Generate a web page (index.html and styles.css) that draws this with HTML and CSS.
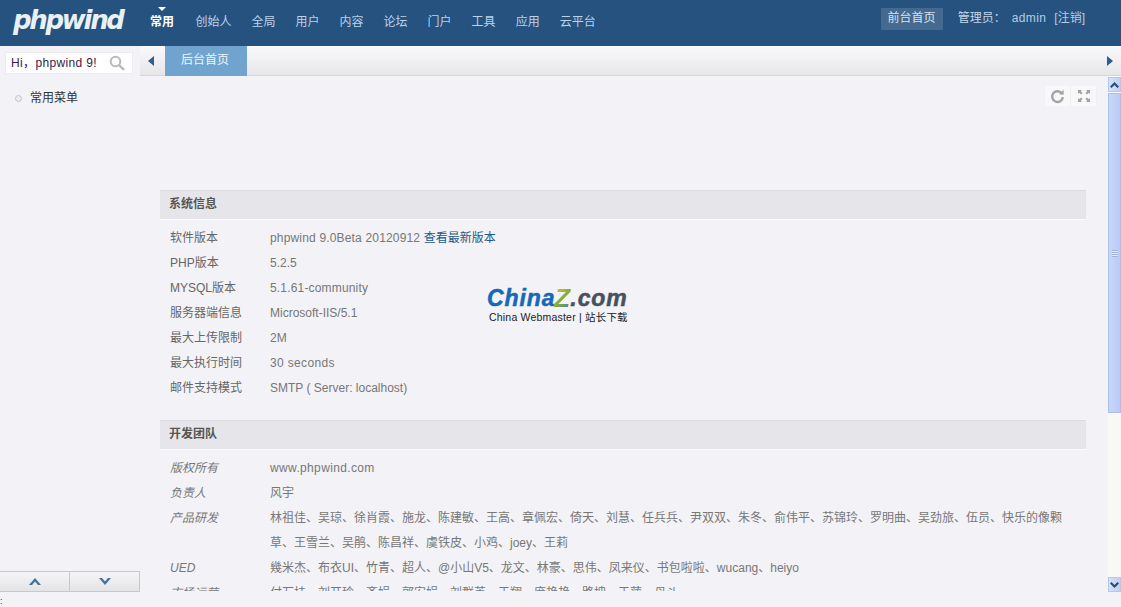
FILE: index.html
```html
<!DOCTYPE html>
<html lang="zh-CN">
<head>
<meta charset="utf-8">
<title>phpwind 后台</title>
<link rel="stylesheet" href="styles.css">
</head>
<body>
<header class="top">
  <div class="logo">phpwind</div>
  <nav class="nav">
    <a class="nav-item active">常用</a>
    <a class="nav-item">创始人</a>
    <a class="nav-item">全局</a>
    <a class="nav-item">用户</a>
    <a class="nav-item">内容</a>
    <a class="nav-item">论坛</a>
    <a class="nav-item">门户</a>
    <a class="nav-item">工具</a>
    <a class="nav-item">应用</a>
    <a class="nav-item">云平台</a>
  </nav>
  <div class="user">
    <a class="home">前台首页</a>
    <span class="admin-label">管理员：</span>
    <span class="admin-name">admin</span>
    <span class="admin-logout">[注销]</span>
  </div>
</header>
<div class="body">
  <aside class="side">
    <div class="search">
      <span class="search-text">Hi，phpwind 9!</span>
      <svg class="search-icon" width="16" height="16" viewBox="0 0 16 16"><circle cx="6.5" cy="6.5" r="4.8" fill="none" stroke="#b9b9b9" stroke-width="2"/><path d="M10 10l5 5" stroke="#b9b9b9" stroke-width="2.4"/></svg>
    </div>
    <div class="menu-item"><i class="dot"></i>常用菜单</div>
    <div class="side-spacer"></div>
    <div class="pager">
      <button class="pager-btn"><svg width="12" height="7" viewBox="0 0 12 7"><path d="M0 7L6 0l6 7H9L6 3.500 3 7z" fill="#42719c"/></svg></button>
      <button class="pager-btn"><svg width="12" height="7" viewBox="0 0 12 7"><path d="M0 0l6 7 6-7H9L6 3.500 3 0z" fill="#42719c"/></svg></button>
    </div>
    <div class="corner">:</div>
  </aside>
  <main class="main">
    <div class="tabs">
      <span class="tab-arrow"><svg width="6" height="10" viewBox="0 0 6 10"><path d="M6 0v10L0 5z" fill="#2b5f8d"/></svg></span>
      <span class="tab">后台首页</span>
      <span class="tab-fill"></span>
      <span class="tab-arrow-right"><svg width="6" height="10" viewBox="0 0 6 10"><path d="M0 0v10l6-5z" fill="#2b5f8d"/></svg></span>
    </div>
    <div class="pane">
      <div class="content">
        <div class="tools">
          <span class="tool"><svg width="15" height="15" viewBox="0 0 14 14"><path d="M11.300 4.500A5 5 0 1 0 12 7.500" fill="none" stroke="#a3a3a3" stroke-width="2.200"/><path d="M8.500 4.800L12.800 5.300V.8z" fill="#a3a3a3"/></svg></span>
          <span class="tool"><svg width="12" height="12" viewBox="0 0 12 12"><path d="M0 0h4L2.800 1.200 4.500 3 3 4.500 1.200 2.800 0 4zM12 0v4L10.800 2.800 9 4.500 7.500 3l1.700-1.800L8 0zM0 12V8l1.200 1.200L3 7.500 4.500 9 2.800 10.800 4 12zM12 12H8l1.200-1.200L7.500 9 9 7.500l1.800 1.700L12 8z" fill="#a3a3a3"/></svg></span>
        </div>
        <section class="block">
          <h2 class="block-title">系统信息</h2>
          <dl class="rows">
            <div class="row"><dt>软件版本</dt><dd><span class="wide">phpwind 9.0Beta 20120912 </span><a class="link">查看最新版本</a></dd></div>
            <div class="row"><dt>PHP版本</dt><dd>5.2.5</dd></div>
            <div class="row"><dt>MYSQL版本</dt><dd class="wide">5.1.61-community</dd></div>
            <div class="row"><dt>服务器端信息</dt><dd>Microsoft-IIS/5.1</dd></div>
            <div class="row"><dt>最大上传限制</dt><dd>2M</dd></div>
            <div class="row"><dt>最大执行时间</dt><dd class="wider">30 seconds</dd></div>
            <div class="row"><dt>邮件支持模式</dt><dd>SMTP ( Server: localhost)</dd></div>
          </dl>
        </section>
        <section class="block">
          <h2 class="block-title">开发团队</h2>
          <dl class="rows team">
            <div class="row"><dt>版权所有</dt><dd class="wider">www.phpwind.com</dd></div>
            <div class="row"><dt>负责人</dt><dd>风宇</dd></div>
            <div class="row"><dt>产品研发</dt><dd>林祖佳、吴琼、徐肖霞、施龙、陈建敏、王高、章佩宏、倚天、刘慧、任兵兵、尹双双、朱冬、俞伟平、苏锦玲、罗明曲、吴劲旅、伍员、快乐的像颗草、王雪兰、吴鹃、陈昌祥、虞铁皮、小鸡、joey、王莉</dd></div>
            <div class="row"><dt>UED</dt><dd>幾米杰、布衣UI、竹青、超人、@小山V5、龙文、林豪、思伟、凤来仪、书包啦啦、wucang、heiyo</dd></div>
            <div class="row"><dt>市场运营</dt><dd>付万挂、刘开玲、齐娟、郭安娟、刘群英、于翔、庞艳艳、路坤、于萍、母斗</dd></div>
          </dl>
        </section>
      </div>
      <div class="scrollbar">
        <div class="sb-btn"><svg width="9" height="6" viewBox="0 0 9 6"><path d="M0 4.500L4.500 0 9 4.500 7.500 6l-3-3-3 3z" fill="#2c4a7c"/></svg></div>
        <div class="sb-thumb"><span class="sb-grip"></span></div>
        <div class="sb-track"></div>
        <div class="sb-btn"><svg width="9" height="6" viewBox="0 0 9 6"><path d="M0 1.500L4.500 6 9 1.500 7.500 0l-3 3-3-3z" fill="#2c4a7c"/></svg></div>
      </div>
    </div>
  </main>
</div>
<div class="watermark">
  <div class="wm-top"><span class="wm-china">China</span><span class="wm-z">Z</span><span class="wm-com">.com</span></div>
  <div class="wm-sub">China Webmaster | 站长下载</div>
</div>
</body>
</html>
```

FILE: styles.css
```css
* { box-sizing: border-box; }
html, body { margin: 0; height: 607px; overflow: hidden; }
body {
  position: relative;
  display: flex;
  flex-direction: column;
  background: #f3f2f6;
  color: #666;
  font: 12px/1.5 "Liberation Sans", "Noto Sans CJK SC", sans-serif;
}
.top {
  height: 46px;
  flex: none;
  display: flex;
  background: #26527f;
}
.logo {
  width: 150px;
  padding: 3px 0 0 13px;
  color: #e9f0f6;
  font: italic bold 26px/34px "DejaVu Sans", sans-serif;
  letter-spacing: -2.3px;
  white-space: nowrap;
}
.nav { display: flex; padding-top: 13px; }
.nav-item {
  position: relative;
  margin-right: 20px;
  color: #b9d3ea;
  font-size: 12px;
  line-height: 18px;
  height: 18px;
}
.nav-item.active { color: #fff; font-weight: bold; margin-right: 21.5px; }
.nav-item.active::before {
  content: "";
  position: absolute;
  left: 50%;
  top: -6px;
  margin-left: -4px;
  border: 4px solid transparent;
  border-top-color: #fff;
  border-bottom: 0;
}
.user {
  margin-left: auto;
  display: flex;
  align-items: flex-start;
  padding: 8px 36px 0 0;
  color: #c3d6e8;
  line-height: 21px;
}
.home {
  background: #45698f;
  padding: 0 7px;
  height: 22px;
  margin-right: 15px;
  color: #d5e2ee;
}
.admin-label { margin-right: 6px; }
.admin-name { margin-right: 8px; color: #b5cde3; letter-spacing: 0.4px; }
.admin-logout { color: #b5cde3; }
.body { flex: 1; display: flex; min-height: 0; }
.side {
  width: 140px;
  flex: none;
  display: flex;
  flex-direction: column;
  background: #f3f2f6;
}
.search {
  width: 128px;
  height: 22px;
  margin: 6px 0 0 5px;
  padding-left: 5px;
  display: flex;
  align-items: center;
  justify-content: space-between;
  background: #fff;
  border: 1px solid #ecebef;
  overflow: hidden;
}
.search-text { color: #3a1a45; white-space: nowrap; width: 92px; overflow: hidden; line-height: 20px; letter-spacing: 0.35px; }
.search-icon { margin-right: 7px; flex: none; }
.menu-item {
  display: flex;
  align-items: center;
  height: 18px;
  margin: 15px 0 0 15px;
  color: #333;
}
.dot {
  width: 7px;
  height: 7px;
  margin-right: 8px;
  border: 1px solid #c5c5c5;
  border-radius: 50%;
  background: #ecebef;
}
.side-spacer { flex: 1; }
.pager { display: flex; width: 140px; height: 21px; flex: none; margin-bottom: 15px; }
.pager-btn {
  width: 70px;
  height: 21px;
  padding: 0;
  display: flex;
  align-items: center;
  justify-content: center;
  background: linear-gradient(#f5f5f7, #e4e4e6);
  border: 1px solid #c8c8ca;
  border-left: 0;
}
.corner {
  position: absolute;
  left: 0;
  bottom: 0;
  font-size: 9px;
  line-height: 12px;
  color: #333;
}
.main { flex: 1; min-width: 0; display: flex; flex-direction: column; }
.tabs {
  height: 30px;
  flex: none;
  display: flex;
  background: linear-gradient(#fafafc, #e6e6e8);
  border-bottom: 1px solid #d6d6d8;
}
.tab-arrow { width: 25px; display: flex; align-items: center; justify-content: center; padding-right: 4px; }
.tab {
  width: 82px;
  height: 30px;
  padding-left: 16px;
  background: #70a4cf;
  color: #eef5fa;
  line-height: 28px;
}
.tab-fill { flex: 1; }
.tab-arrow-right { width: 15px; display: flex; align-items: center; justify-content: center; padding-right: 8px; }
.pane { flex: 1; display: flex; min-height: 0; }
.content { flex: 1; min-width: 0; height: 515px; overflow: hidden; padding: 0 22px 0 20px; }
.tools { display: flex; justify-content: flex-end; height: 114px; padding-top: 10px; margin-right: -11px; }
.tool {
  width: 26px;
  height: 20px;
  display: flex;
  align-items: center;
  justify-content: center;
  background: #f8f8fa;
  border-right: 1px solid #efeef2;
}
.block { margin-bottom: 19px; }
.block-title {
  height: 30px;
  margin: 0;
  padding-left: 9px;
  background: #e6e5e9;
  border-top: 1px solid #dddce0;
  border-bottom: 1px solid #fbfbfd;
  color: #555;
  font-size: 12px;
  font-weight: bold;
  line-height: 27px;
}
.rows { margin: 6px 0 0; }
.row { display: flex; min-height: 25px; line-height: 25px; }
.row dt { width: 110px; flex: none; padding-left: 10px; color: #666; }
.row dd { flex: 1; margin: 0; padding-right: 20px; color: #777; }
.row dd.wide, .wide { letter-spacing: 0.17px; }
.row dd.wider { letter-spacing: 0.35px; }
.team dt { font-style: italic; color: #777; }
.link { color: #1e5a86; }
.scrollbar {
  width: 13px;
  height: 516px;
  flex: none;
  display: flex;
  flex-direction: column;
  padding-top: 1px;
  background: #f8f8f4;
}
.sb-btn {
  height: 15px;
  flex: none;
  display: flex;
  align-items: center;
  justify-content: center;
  background: linear-gradient(90deg, #d7e2f8, #bdd0f6);
  border: 1px solid #b4c8ee;
}
.sb-thumb {
  height: 320px;
  margin-top: 1px;
  flex: none;
  display: flex;
  align-items: center;
  justify-content: center;
  background: linear-gradient(90deg, #c9d6fa, #b8cbf8);
  border: 1px solid #aebfe8;
}
.sb-grip { width: 6px; height: 7px; background: repeating-linear-gradient(#9fb3de 0 1px, #e3eafb 1px 2px); }
.sb-track { flex: 1; }
.watermark {
  position: absolute;
  left: 487px;
  top: 287px;
  width: 145px;
}
.wm-top {
  display: flex;
  height: 23px;
  font: italic bold 23px/23px "Liberation Sans", sans-serif;
  letter-spacing: 0.9px;
  white-space: nowrap;
  -webkit-text-stroke: 0.5px currentColor;
}
.wm-china { color: #1668b8; }
.wm-z {
  font-size: 23px;
  transform: scale(1.15);
  color: #8fae3a;
  background: linear-gradient(135deg, #e8c33c, #86ad3c 50%, #2b7cc4);
  -webkit-background-clip: text;
  background-clip: text;
  -webkit-text-fill-color: transparent;
  -webkit-text-stroke: 0;
}
.wm-com { color: #46525f; }
.wm-sub {
  margin: 1px 0 0 2px;
  color: #222;
  font-size: 10.5px;
  line-height: 12px;
  letter-spacing: 0.2px;
  white-space: nowrap;
}
```
